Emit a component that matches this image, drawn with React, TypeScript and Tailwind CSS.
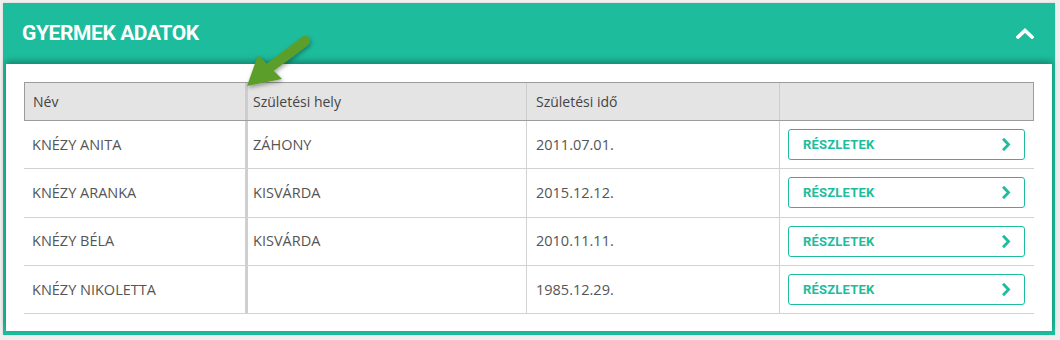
import React from "react";

type Child = { name: string; place: string; born: string };

const children: Child[] = [
  { name: "KNÉZY ANITA", place: "ZÁHONY", born: "2011.07.01." },
  { name: "KNÉZY ARANKA", place: "KISVÁRDA", born: "2015.12.12." },
  { name: "KNÉZY BÉLA", place: "KISVÁRDA", born: "2010.11.11." },
  { name: "KNÉZY NIKOLETTA", place: "", born: "1985.12.29." },
];

function ChevronUp() {
  return (
    <svg width="18" height="11" viewBox="0 0 18 11" fill="none">
      <polyline
        points="2,9 9,2.5 16,9"
        stroke="#ffffff"
        strokeWidth="3.6"
        strokeLinecap="square"
        strokeLinejoin="miter"
      />
    </svg>
  );
}

function ChevronRight() {
  return (
    <svg width="9" height="13" viewBox="0 0 9 13" fill="none">
      <polyline
        points="2,1.8 6.5,6.5 2,11.2"
        stroke="#1dbc9c"
        strokeWidth="2.8"
        strokeLinecap="square"
        strokeLinejoin="miter"
      />
    </svg>
  );
}

function PointerArrow() {
  return (
    <svg
      className="absolute left-0 top-0 pointer-events-none"
      width="1060"
      height="340"
      viewBox="0 0 1060 340"
    >
      <defs>
        <filter id="arrowShadow" x="-30%" y="-30%" width="160%" height="160%">
          <feDropShadow dx="1" dy="2" stdDeviation="2" floodColor="#000" floodOpacity="0.35" />
        </filter>
      </defs>
      <g filter="url(#arrowShadow)">
        <line x1="305" y1="41" x2="268" y2="69" stroke="#5c9e2c" strokeWidth="10" strokeLinecap="round" />
        <polygon points="247,86 258,55 282,79" fill="#5c9e2c" />
      </g>
    </svg>
  );
}

export default function App() {
  const body = { fontFamily: '"Open Sans", "Liberation Sans", sans-serif' };
  const display = { fontFamily: 'Roboto, "Liberation Sans", sans-serif' };

  return (
    <div className="relative w-[1060px] h-[340px] bg-[#efefef] pt-[3px] pl-[3px]" style={body}>
      <section className="w-[1052px] bg-[#1dbc9c] px-[3px] pb-[4px] shadow-[0_0_2px_rgba(0,0,0,0.12)]">
        <header className="h-[61px] flex items-center justify-between pl-[16px] pr-[18px]">
          <h2
            className="text-white text-[21px] font-bold tracking-[-0.4px] leading-none"
            style={display}
          >
            GYERMEK ADATOK
          </h2>
          <ChevronUp />
        </header>

        <div className="relative bg-white px-[18px] pt-[18px] pb-[17px] shadow-[0_-3px_6px_rgba(0,0,0,0.28)]">
          <div className="grid grid-cols-[220px_281px_253px_1fr] h-[39px] border border-[#9c9c9c] bg-[#e4e4e4] text-[14px] text-[#444]">
            <div className="flex items-center pl-[8px]">Név</div>
            <div className="flex items-center pl-[5px] border-l-[3px] border-[#cdcdcd]">Születési hely</div>
            <div className="flex items-center pl-[9px] border-l border-[#cdcdcd]">Születési idő</div>
            <div className="border-l border-[#cdcdcd]" />
          </div>

          {children.map((c) => (
            <div
              key={c.name}
              className="grid grid-cols-[221px_281px_253px_1fr] h-[48.33px] border-b border-[#d2d2d2] text-[14.5px] text-[#555]"
            >
              <div className="flex items-center pl-[8px]">{c.name}</div>
              <div className="flex items-center pl-[5px] border-l-[3px] border-[#cfcfcf]">{c.place}</div>
              <div className="flex items-center pl-[9px] border-l border-[#d2d2d2]">{c.born}</div>
              <div className="flex items-center pl-[8px] border-l border-[#d2d2d2]">
                <button
                  type="button"
                  className="w-[237px] h-[31px] flex items-center justify-between pl-[14px] pr-[13px] border border-[#1dbc9c] rounded-[3px] bg-white"
                >
                  <span
                    className="text-[13px] font-bold text-[#1dbc9c] tracking-[0.2px] leading-none"
                    style={display}
                  >
                    RÉSZLETEK
                  </span>
                  <ChevronRight />
                </button>
              </div>
            </div>
          ))}
        </div>
      </section>

      <PointerArrow />
    </div>
  );
}
